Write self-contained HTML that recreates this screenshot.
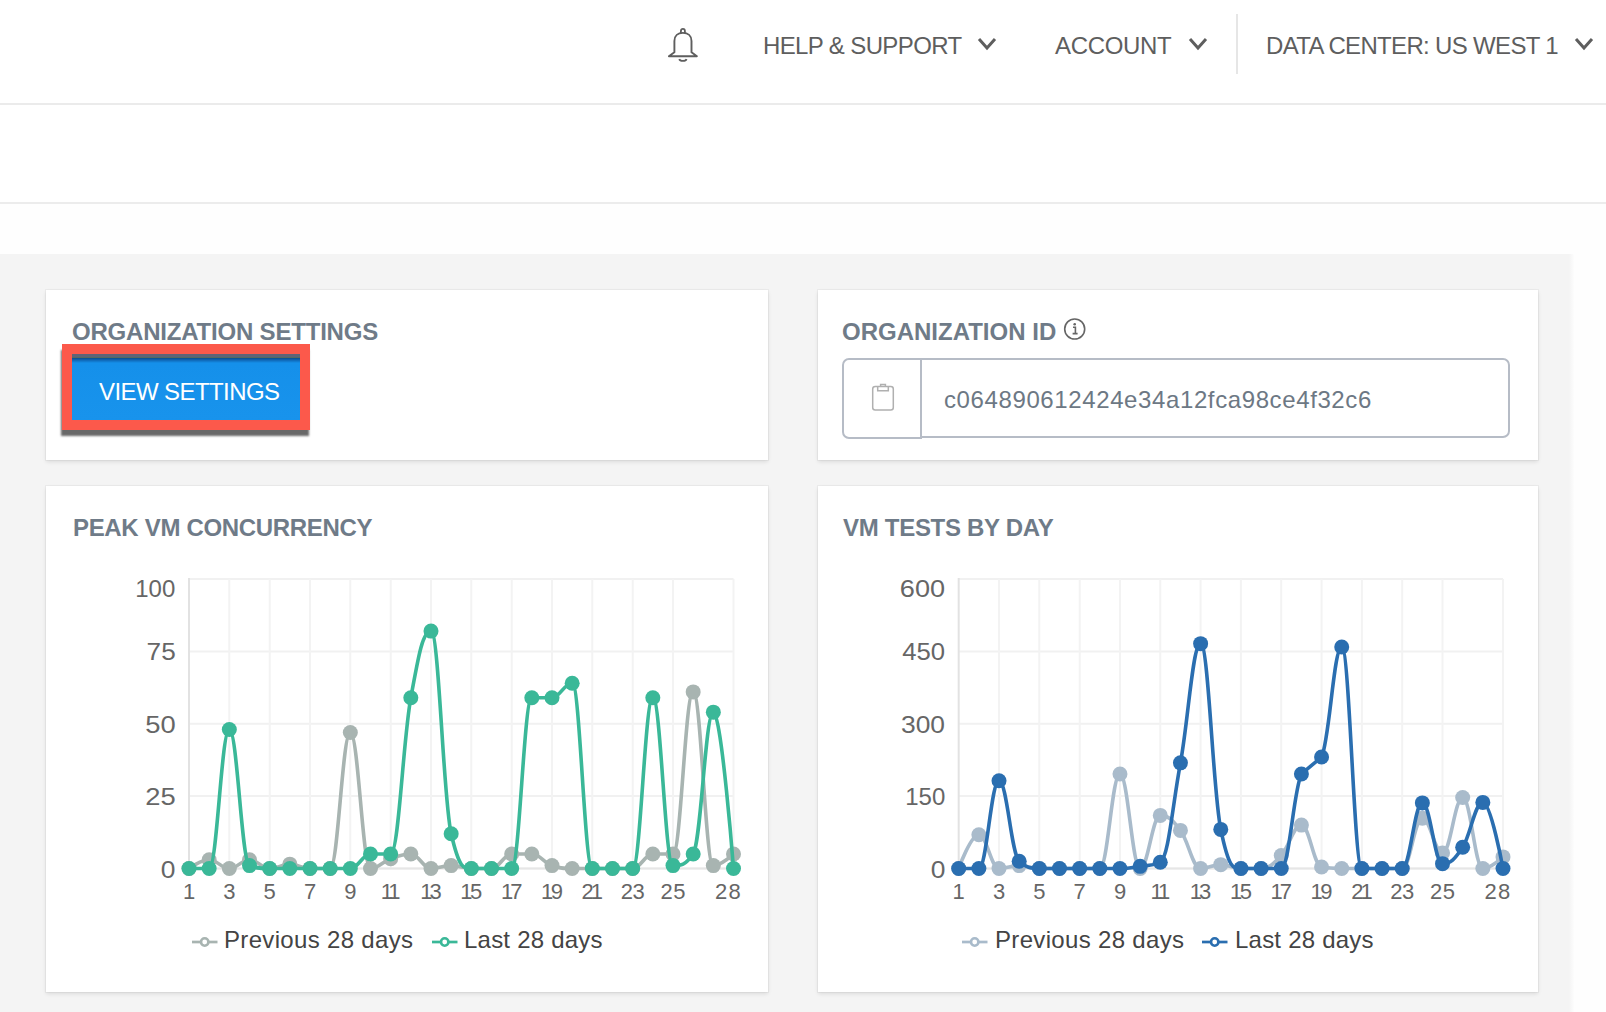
<!DOCTYPE html>
<html><head><meta charset="utf-8"><title>Dashboard</title>
<style>
*{box-sizing:border-box}
html,body{margin:0;padding:0;width:1606px;height:1012px;overflow:hidden;background:#fefefe;font-family:"Liberation Sans",sans-serif;position:relative}
.abs{position:absolute}
.hdr{position:absolute;left:0;top:0;width:1606px;height:105px;border-bottom:2px solid #ebebeb;background:#fff}
.nav{position:absolute;top:32px;font-size:24px;color:#5e5e5e;white-space:nowrap;line-height:28px}
.band{position:absolute;left:0;top:105px;width:1606px;height:99px;border-bottom:2px solid #ececec;background:#fff}
.gray{position:absolute;left:0;top:254px;width:1574px;height:758px;background:linear-gradient(90deg,#f4f4f4 0,#f4f4f4 1569px,#fdfdfd 1574px)}
.card{position:absolute;background:#fff;box-shadow:0 0 0 1px rgba(0,0,0,0.035),0 2px 4px rgba(0,0,0,0.10)}
.title{position:absolute;font-weight:700;font-size:24px;color:#6f7b88;white-space:nowrap;line-height:28px}
.yl{position:absolute;font-size:24px;color:#666;text-align:right;line-height:28px;white-space:nowrap}
.xl{position:absolute;font-size:22px;color:#666;text-align:center;width:60px;line-height:22px;white-space:nowrap}
.leg{position:absolute;font-size:24px;color:#444;white-space:nowrap;line-height:28px}
svg{position:absolute;left:0;top:0}
</style></head><body>
<div class="hdr">
  <svg width="40" height="44" style="left:663px;top:22px" viewBox="0 0 40 44">
    <path d="M11.4 30.2 L11.4 19 C11.4 13.6 15 10.9 19.9 10.9 C24.8 10.9 28.5 13.6 28.5 19 L28.5 30.2 L33.9 34.2 L5.9 34.2 Z" fill="none" stroke="#5e5e5e" stroke-width="1.9" stroke-linejoin="round"/>
    <path d="M17.9 11 L17.9 8.9 A2 2 0 0 1 21.9 8.9 L21.9 11" fill="none" stroke="#5e5e5e" stroke-width="1.8"/>
    <path d="M16.2 37.1 A3.8 2.4 0 0 0 23.6 37.1" fill="none" stroke="#5e5e5e" stroke-width="1.8"/>
  </svg>
  <div class="nav" style="left:763px;letter-spacing:-0.62px">HELP &amp; SUPPORT</div>
  <svg width="24" height="16" style="left:975px;top:36px"><polyline points="4,3 12,12 20,3" fill="none" stroke="#5e5e5e" stroke-width="3"/></svg>
  <div class="nav" style="left:1055px;letter-spacing:-0.33px">ACCOUNT</div>
  <svg width="24" height="16" style="left:1186px;top:36px"><polyline points="4,3 12,12 20,3" fill="none" stroke="#5e5e5e" stroke-width="3"/></svg>
  <div class="abs" style="left:1236px;top:14px;width:2px;height:60px;background:#e6e6e6"></div>
  <div class="nav" style="left:1266px;letter-spacing:-0.67px">DATA CENTER: US WEST 1</div>
  <svg width="24" height="16" style="left:1572px;top:36px"><polyline points="4,3 12,12 20,3" fill="none" stroke="#5e5e5e" stroke-width="3"/></svg>
</div>
<div class="band"></div>
<div class="gray"></div>

<div class="card" style="left:46px;top:290px;width:722px;height:170px"></div>
<div class="title" style="left:72px;top:318px;letter-spacing:-0.2px">ORGANIZATION SETTINGS</div>
<div class="abs" style="left:62px;top:344px;width:248px;height:86px;background:#fc594b;box-shadow:-1.5px 6px 2px rgba(55,55,55,0.75)"></div>
<div class="abs" style="left:72px;top:354px;width:228px;height:66px;background:linear-gradient(#5f6478 0,#5f6478 3px,#566a60 3px,#566a60 4px,#0d4a8c 4px,#0f66b4 6px,#1590ea 9px,#1893ec 100%)"></div>
<div class="abs" style="left:99px;top:378px;font-size:24px;color:#fff;line-height:28px;white-space:nowrap;letter-spacing:-0.58px">VIEW SETTINGS</div>

<div class="card" style="left:818px;top:290px;width:720px;height:170px"></div>
<div class="title" style="left:842px;top:318px">ORGANIZATION ID</div>
<svg width="26" height="26" style="left:1062px;top:316px" viewBox="0 0 26 26">
  <circle cx="12.7" cy="13" r="10" fill="none" stroke="#666" stroke-width="1.6"/>
  <circle cx="12.7" cy="8.2" r="1.3" fill="#666"/>
  <path d="M11 11.2 L13.4 11.2 L13.4 17.6 M10.6 17.6 L15.6 17.6" fill="none" stroke="#666" stroke-width="1.6"/>
</svg>
<div class="abs" style="left:920px;top:358px;width:590px;height:80px;border:2px solid #b6bcc6;border-radius:0 7px 7px 0"></div>
<div class="abs" style="left:842px;top:358px;width:80px;height:81px;border:2px solid #b6bcc6;border-radius:7px 0 0 7px;background:#fff"></div>
<svg width="30" height="32" style="left:868px;top:381px" viewBox="0 0 30 32">
  <rect x="4.7" y="5.4" width="20.6" height="23.6" rx="2.5" fill="none" stroke="#b0b0b0" stroke-width="1.5"/>
  <path d="M9.7 5.4 L9.7 9.7 L20.3 9.7 L20.3 5.4 M12.6 5.4 L12.6 3.6 L17.4 3.6 L17.4 5.4" fill="none" stroke="#b0b0b0" stroke-width="1.5"/>
</svg>
<div class="abs" style="left:944px;top:386px;font-size:24px;color:#6d7884;line-height:28px;white-space:nowrap;letter-spacing:0.61px">c064890612424e34a12fca98ce4f32c6</div>

<div class="card" style="left:46px;top:486px;width:722px;height:506px"></div>
<div class="title" style="left:73px;top:514px;letter-spacing:-0.33px">PEAK VM CONCURRENCY</div>
<div class="card" style="left:818px;top:486px;width:720px;height:506px"></div>
<div class="title" style="left:843px;top:514px;letter-spacing:-0.29px">VM TESTS BY DAY</div>

<svg width="1606" height="1012" style="left:0;top:0">
<line x1="189" y1="868.5" x2="733.5" y2="868.5" stroke="#f1f1f1" stroke-width="2"/>
<line x1="189" y1="796.1" x2="733.5" y2="796.1" stroke="#f1f1f1" stroke-width="2"/>
<line x1="189" y1="723.8" x2="733.5" y2="723.8" stroke="#f1f1f1" stroke-width="2"/>
<line x1="189" y1="651.4" x2="733.5" y2="651.4" stroke="#f1f1f1" stroke-width="2"/>
<line x1="189" y1="579.0" x2="733.5" y2="579.0" stroke="#f1f1f1" stroke-width="2"/>
<line x1="229.3" y1="579" x2="229.3" y2="868.5" stroke="#f3f3f3" stroke-width="2"/>
<line x1="269.7" y1="579" x2="269.7" y2="868.5" stroke="#f3f3f3" stroke-width="2"/>
<line x1="310.0" y1="579" x2="310.0" y2="868.5" stroke="#f3f3f3" stroke-width="2"/>
<line x1="350.3" y1="579" x2="350.3" y2="868.5" stroke="#f3f3f3" stroke-width="2"/>
<line x1="390.7" y1="579" x2="390.7" y2="868.5" stroke="#f3f3f3" stroke-width="2"/>
<line x1="431.0" y1="579" x2="431.0" y2="868.5" stroke="#f3f3f3" stroke-width="2"/>
<line x1="471.3" y1="579" x2="471.3" y2="868.5" stroke="#f3f3f3" stroke-width="2"/>
<line x1="511.7" y1="579" x2="511.7" y2="868.5" stroke="#f3f3f3" stroke-width="2"/>
<line x1="552.0" y1="579" x2="552.0" y2="868.5" stroke="#f3f3f3" stroke-width="2"/>
<line x1="592.3" y1="579" x2="592.3" y2="868.5" stroke="#f3f3f3" stroke-width="2"/>
<line x1="632.7" y1="579" x2="632.7" y2="868.5" stroke="#f3f3f3" stroke-width="2"/>
<line x1="673.0" y1="579" x2="673.0" y2="868.5" stroke="#f3f3f3" stroke-width="2"/>
<line x1="733.5" y1="579" x2="733.5" y2="868.5" stroke="#f3f3f3" stroke-width="2"/>
<line x1="189" y1="578" x2="189" y2="869.5" stroke="#e2e2e2" stroke-width="2"/>
<line x1="189" y1="868.5" x2="733.5" y2="868.5" stroke="#e6e6e6" stroke-width="2"/>
<path d="M 189.00 868.50 C 189.00 868.50 201.10 859.82 209.17 859.82 C 217.23 859.82 221.27 868.50 229.33 868.50 C 237.40 868.50 241.43 859.82 249.50 859.82 C 257.57 859.82 261.60 868.50 269.67 868.50 C 277.73 868.50 281.77 864.16 289.83 864.16 C 297.90 864.16 301.93 868.50 310.00 868.50 C 318.07 868.50 322.10 868.50 330.17 868.50 C 338.23 868.50 342.27 732.43 350.33 732.43 C 358.40 732.43 362.43 868.50 370.50 868.50 C 378.57 868.50 382.60 861.55 390.67 858.66 C 398.73 855.76 402.77 854.02 410.83 854.02 C 418.90 854.02 422.93 868.50 431.00 868.50 C 439.07 868.50 443.10 865.61 451.17 865.61 C 459.23 865.61 463.27 868.50 471.33 868.50 C 479.40 868.50 483.43 868.50 491.50 868.50 C 499.57 868.50 503.60 854.02 511.67 854.02 C 519.73 854.02 523.77 854.02 531.83 854.02 C 539.90 854.02 543.93 862.71 552.00 865.61 C 560.07 868.50 564.10 868.50 572.17 868.50 C 580.23 868.50 584.27 868.50 592.33 868.50 C 600.40 868.50 604.43 868.50 612.50 868.50 C 620.57 868.50 624.60 868.50 632.67 868.50 C 640.73 868.50 644.77 854.02 652.83 854.02 C 660.90 854.02 664.93 854.02 673.00 854.02 C 681.07 854.02 685.10 691.90 693.17 691.90 C 701.23 691.90 705.27 865.61 713.33 865.61 C 721.40 865.61 733.50 854.02 733.50 854.02" fill="none" stroke="#a8b4b1" stroke-width="3.6" stroke-linejoin="round" stroke-linecap="round"/>
<circle cx="189.00" cy="868.50" r="7.5" fill="#a8b4b1"/>
<circle cx="209.17" cy="859.82" r="7.5" fill="#a8b4b1"/>
<circle cx="229.33" cy="868.50" r="7.5" fill="#a8b4b1"/>
<circle cx="249.50" cy="859.82" r="7.5" fill="#a8b4b1"/>
<circle cx="269.67" cy="868.50" r="7.5" fill="#a8b4b1"/>
<circle cx="289.83" cy="864.16" r="7.5" fill="#a8b4b1"/>
<circle cx="310.00" cy="868.50" r="7.5" fill="#a8b4b1"/>
<circle cx="330.17" cy="868.50" r="7.5" fill="#a8b4b1"/>
<circle cx="350.33" cy="732.43" r="7.5" fill="#a8b4b1"/>
<circle cx="370.50" cy="868.50" r="7.5" fill="#a8b4b1"/>
<circle cx="390.67" cy="858.66" r="7.5" fill="#a8b4b1"/>
<circle cx="410.83" cy="854.02" r="7.5" fill="#a8b4b1"/>
<circle cx="431.00" cy="868.50" r="7.5" fill="#a8b4b1"/>
<circle cx="451.17" cy="865.61" r="7.5" fill="#a8b4b1"/>
<circle cx="471.33" cy="868.50" r="7.5" fill="#a8b4b1"/>
<circle cx="491.50" cy="868.50" r="7.5" fill="#a8b4b1"/>
<circle cx="511.67" cy="854.02" r="7.5" fill="#a8b4b1"/>
<circle cx="531.83" cy="854.02" r="7.5" fill="#a8b4b1"/>
<circle cx="552.00" cy="865.61" r="7.5" fill="#a8b4b1"/>
<circle cx="572.17" cy="868.50" r="7.5" fill="#a8b4b1"/>
<circle cx="592.33" cy="868.50" r="7.5" fill="#a8b4b1"/>
<circle cx="612.50" cy="868.50" r="7.5" fill="#a8b4b1"/>
<circle cx="632.67" cy="868.50" r="7.5" fill="#a8b4b1"/>
<circle cx="652.83" cy="854.02" r="7.5" fill="#a8b4b1"/>
<circle cx="673.00" cy="854.02" r="7.5" fill="#a8b4b1"/>
<circle cx="693.17" cy="691.90" r="7.5" fill="#a8b4b1"/>
<circle cx="713.33" cy="865.61" r="7.5" fill="#a8b4b1"/>
<circle cx="733.50" cy="854.02" r="7.5" fill="#a8b4b1"/>
<path d="M 189.00 868.50 C 189.00 868.50 201.10 868.50 209.17 868.50 C 217.23 868.50 221.27 729.54 229.33 729.54 C 237.40 729.54 241.43 862.71 249.50 865.61 C 257.57 868.50 261.60 868.50 269.67 868.50 C 277.73 868.50 281.77 868.50 289.83 868.50 C 297.90 868.50 301.93 868.50 310.00 868.50 C 318.07 868.50 322.10 868.50 330.17 868.50 C 338.23 868.50 342.27 868.50 350.33 868.50 C 358.40 868.50 362.43 854.02 370.50 854.02 C 378.57 854.02 382.60 854.02 390.67 854.02 C 398.73 854.02 402.77 742.28 410.83 697.69 C 418.90 653.11 422.93 631.11 431.00 631.11 C 439.07 631.11 443.10 799.02 451.17 833.76 C 459.23 868.50 463.27 868.50 471.33 868.50 C 479.40 868.50 483.43 868.50 491.50 868.50 C 499.57 868.50 503.60 868.50 511.67 868.50 C 519.73 868.50 523.77 697.69 531.83 697.69 C 539.90 697.69 543.93 697.69 552.00 697.69 C 560.07 697.69 564.10 683.22 572.17 683.22 C 580.23 683.22 584.27 868.50 592.33 868.50 C 600.40 868.50 604.43 868.50 612.50 868.50 C 620.57 868.50 624.60 868.50 632.67 868.50 C 640.73 868.50 644.77 697.69 652.83 697.69 C 660.90 697.69 664.93 865.61 673.00 865.61 C 681.07 865.61 685.10 865.61 693.17 854.02 C 701.23 842.44 705.27 712.17 713.33 712.17 C 721.40 712.17 733.50 868.50 733.50 868.50" fill="none" stroke="#3ab898" stroke-width="3.6" stroke-linejoin="round" stroke-linecap="round"/>
<circle cx="189.00" cy="868.50" r="7.5" fill="#3ab898"/>
<circle cx="209.17" cy="868.50" r="7.5" fill="#3ab898"/>
<circle cx="229.33" cy="729.54" r="7.5" fill="#3ab898"/>
<circle cx="249.50" cy="865.61" r="7.5" fill="#3ab898"/>
<circle cx="269.67" cy="868.50" r="7.5" fill="#3ab898"/>
<circle cx="289.83" cy="868.50" r="7.5" fill="#3ab898"/>
<circle cx="310.00" cy="868.50" r="7.5" fill="#3ab898"/>
<circle cx="330.17" cy="868.50" r="7.5" fill="#3ab898"/>
<circle cx="350.33" cy="868.50" r="7.5" fill="#3ab898"/>
<circle cx="370.50" cy="854.02" r="7.5" fill="#3ab898"/>
<circle cx="390.67" cy="854.02" r="7.5" fill="#3ab898"/>
<circle cx="410.83" cy="697.69" r="7.5" fill="#3ab898"/>
<circle cx="431.00" cy="631.11" r="7.5" fill="#3ab898"/>
<circle cx="451.17" cy="833.76" r="7.5" fill="#3ab898"/>
<circle cx="471.33" cy="868.50" r="7.5" fill="#3ab898"/>
<circle cx="491.50" cy="868.50" r="7.5" fill="#3ab898"/>
<circle cx="511.67" cy="868.50" r="7.5" fill="#3ab898"/>
<circle cx="531.83" cy="697.69" r="7.5" fill="#3ab898"/>
<circle cx="552.00" cy="697.69" r="7.5" fill="#3ab898"/>
<circle cx="572.17" cy="683.22" r="7.5" fill="#3ab898"/>
<circle cx="592.33" cy="868.50" r="7.5" fill="#3ab898"/>
<circle cx="612.50" cy="868.50" r="7.5" fill="#3ab898"/>
<circle cx="632.67" cy="868.50" r="7.5" fill="#3ab898"/>
<circle cx="652.83" cy="697.69" r="7.5" fill="#3ab898"/>
<circle cx="673.00" cy="865.61" r="7.5" fill="#3ab898"/>
<circle cx="693.17" cy="854.02" r="7.5" fill="#3ab898"/>
<circle cx="713.33" cy="712.17" r="7.5" fill="#3ab898"/>
<circle cx="733.50" cy="868.50" r="7.5" fill="#3ab898"/>
<line x1="958.7" y1="868.5" x2="1503" y2="868.5" stroke="#f1f1f1" stroke-width="2"/>
<line x1="958.7" y1="796.1" x2="1503" y2="796.1" stroke="#f1f1f1" stroke-width="2"/>
<line x1="958.7" y1="723.8" x2="1503" y2="723.8" stroke="#f1f1f1" stroke-width="2"/>
<line x1="958.7" y1="651.4" x2="1503" y2="651.4" stroke="#f1f1f1" stroke-width="2"/>
<line x1="958.7" y1="579.0" x2="1503" y2="579.0" stroke="#f1f1f1" stroke-width="2"/>
<line x1="999.0" y1="579" x2="999.0" y2="868.5" stroke="#f3f3f3" stroke-width="2"/>
<line x1="1039.3" y1="579" x2="1039.3" y2="868.5" stroke="#f3f3f3" stroke-width="2"/>
<line x1="1079.7" y1="579" x2="1079.7" y2="868.5" stroke="#f3f3f3" stroke-width="2"/>
<line x1="1120.0" y1="579" x2="1120.0" y2="868.5" stroke="#f3f3f3" stroke-width="2"/>
<line x1="1160.3" y1="579" x2="1160.3" y2="868.5" stroke="#f3f3f3" stroke-width="2"/>
<line x1="1200.6" y1="579" x2="1200.6" y2="868.5" stroke="#f3f3f3" stroke-width="2"/>
<line x1="1240.9" y1="579" x2="1240.9" y2="868.5" stroke="#f3f3f3" stroke-width="2"/>
<line x1="1281.2" y1="579" x2="1281.2" y2="868.5" stroke="#f3f3f3" stroke-width="2"/>
<line x1="1321.6" y1="579" x2="1321.6" y2="868.5" stroke="#f3f3f3" stroke-width="2"/>
<line x1="1361.9" y1="579" x2="1361.9" y2="868.5" stroke="#f3f3f3" stroke-width="2"/>
<line x1="1402.2" y1="579" x2="1402.2" y2="868.5" stroke="#f3f3f3" stroke-width="2"/>
<line x1="1442.5" y1="579" x2="1442.5" y2="868.5" stroke="#f3f3f3" stroke-width="2"/>
<line x1="1503.0" y1="579" x2="1503.0" y2="868.5" stroke="#f3f3f3" stroke-width="2"/>
<line x1="958.7" y1="578" x2="958.7" y2="869.5" stroke="#e2e2e2" stroke-width="2"/>
<line x1="958.7" y1="868.5" x2="1503" y2="868.5" stroke="#e6e6e6" stroke-width="2"/>
<path d="M 958.70 868.50 C 958.70 868.50 970.80 834.73 978.86 834.73 C 986.92 834.73 990.95 868.50 999.02 868.50 C 1007.08 868.50 1011.11 865.61 1019.18 865.61 C 1027.24 865.61 1031.27 868.50 1039.34 868.50 C 1047.40 868.50 1051.43 868.50 1059.50 868.50 C 1067.56 868.50 1071.59 868.50 1079.66 868.50 C 1087.72 868.50 1091.75 868.50 1099.81 868.50 C 1107.88 868.50 1111.91 773.93 1119.97 773.93 C 1128.04 773.93 1132.07 868.50 1140.13 868.50 C 1148.20 868.50 1152.23 815.42 1160.29 815.42 C 1168.36 815.42 1172.39 819.77 1180.45 830.38 C 1188.52 841.00 1192.55 868.50 1200.61 868.50 C 1208.67 868.50 1212.71 864.64 1220.77 864.64 C 1228.83 864.64 1232.87 868.50 1240.93 868.50 C 1248.99 868.50 1253.03 868.50 1261.09 868.50 C 1269.15 868.50 1273.18 864.16 1281.25 855.47 C 1289.31 846.79 1293.34 825.08 1301.41 825.08 C 1309.47 825.08 1313.50 865.61 1321.57 867.05 C 1329.63 868.50 1333.66 868.50 1341.73 868.50 C 1349.79 868.50 1353.82 868.50 1361.89 868.50 C 1369.95 868.50 1373.98 868.50 1382.04 868.50 C 1390.11 868.50 1394.14 868.50 1402.20 868.50 C 1410.27 868.50 1414.30 818.32 1422.36 818.32 C 1430.43 818.32 1434.46 853.06 1442.52 853.06 C 1450.59 853.06 1454.62 797.57 1462.68 797.57 C 1470.75 797.57 1474.78 868.50 1482.84 868.50 C 1490.90 868.50 1503.00 856.92 1503.00 856.92" fill="none" stroke="#a9bbcb" stroke-width="3.6" stroke-linejoin="round" stroke-linecap="round"/>
<circle cx="958.70" cy="868.50" r="7.5" fill="#a9bbcb"/>
<circle cx="978.86" cy="834.73" r="7.5" fill="#a9bbcb"/>
<circle cx="999.02" cy="868.50" r="7.5" fill="#a9bbcb"/>
<circle cx="1019.18" cy="865.61" r="7.5" fill="#a9bbcb"/>
<circle cx="1039.34" cy="868.50" r="7.5" fill="#a9bbcb"/>
<circle cx="1059.50" cy="868.50" r="7.5" fill="#a9bbcb"/>
<circle cx="1079.66" cy="868.50" r="7.5" fill="#a9bbcb"/>
<circle cx="1099.81" cy="868.50" r="7.5" fill="#a9bbcb"/>
<circle cx="1119.97" cy="773.93" r="7.5" fill="#a9bbcb"/>
<circle cx="1140.13" cy="868.50" r="7.5" fill="#a9bbcb"/>
<circle cx="1160.29" cy="815.42" r="7.5" fill="#a9bbcb"/>
<circle cx="1180.45" cy="830.38" r="7.5" fill="#a9bbcb"/>
<circle cx="1200.61" cy="868.50" r="7.5" fill="#a9bbcb"/>
<circle cx="1220.77" cy="864.64" r="7.5" fill="#a9bbcb"/>
<circle cx="1240.93" cy="868.50" r="7.5" fill="#a9bbcb"/>
<circle cx="1261.09" cy="868.50" r="7.5" fill="#a9bbcb"/>
<circle cx="1281.25" cy="855.47" r="7.5" fill="#a9bbcb"/>
<circle cx="1301.41" cy="825.08" r="7.5" fill="#a9bbcb"/>
<circle cx="1321.57" cy="867.05" r="7.5" fill="#a9bbcb"/>
<circle cx="1341.73" cy="868.50" r="7.5" fill="#a9bbcb"/>
<circle cx="1361.89" cy="868.50" r="7.5" fill="#a9bbcb"/>
<circle cx="1382.04" cy="868.50" r="7.5" fill="#a9bbcb"/>
<circle cx="1402.20" cy="868.50" r="7.5" fill="#a9bbcb"/>
<circle cx="1422.36" cy="818.32" r="7.5" fill="#a9bbcb"/>
<circle cx="1442.52" cy="853.06" r="7.5" fill="#a9bbcb"/>
<circle cx="1462.68" cy="797.57" r="7.5" fill="#a9bbcb"/>
<circle cx="1482.84" cy="868.50" r="7.5" fill="#a9bbcb"/>
<circle cx="1503.00" cy="856.92" r="7.5" fill="#a9bbcb"/>
<path d="M 958.70 868.50 C 958.70 868.50 970.80 868.50 978.86 868.50 C 986.92 868.50 990.95 780.68 999.02 780.68 C 1007.08 780.68 1011.11 854.03 1019.18 861.26 C 1027.24 868.50 1031.27 868.50 1039.34 868.50 C 1047.40 868.50 1051.43 868.50 1059.50 868.50 C 1067.56 868.50 1071.59 868.50 1079.66 868.50 C 1087.72 868.50 1091.75 868.50 1099.81 868.50 C 1107.88 868.50 1111.91 868.50 1119.97 868.50 C 1128.04 868.50 1132.07 867.58 1140.13 866.33 C 1148.20 865.07 1152.23 866.33 1160.29 862.23 C 1168.36 858.13 1172.39 806.55 1180.45 762.83 C 1188.52 719.12 1192.55 643.65 1200.61 643.65 C 1208.67 643.65 1212.71 790.34 1220.77 829.42 C 1228.83 868.50 1232.87 868.50 1240.93 868.50 C 1248.99 868.50 1253.03 868.50 1261.09 868.50 C 1269.15 868.50 1273.18 868.50 1281.25 868.50 C 1289.31 868.50 1293.34 790.82 1301.41 773.93 L 1321.57 757.04 C 1329.63 740.15 1333.66 647.03 1341.73 647.03 C 1349.79 647.03 1353.82 868.50 1361.89 868.50 C 1369.95 868.50 1373.98 868.50 1382.04 868.50 C 1390.11 868.50 1394.14 868.50 1402.20 868.50 C 1410.27 868.50 1414.30 802.88 1422.36 802.88 C 1430.43 802.88 1434.46 863.67 1442.52 863.67 C 1450.59 863.67 1454.62 859.53 1462.68 847.27 C 1470.75 835.01 1474.78 802.40 1482.84 802.40 C 1490.90 802.40 1503.00 868.50 1503.00 868.50" fill="none" stroke="#2a6eb0" stroke-width="3.6" stroke-linejoin="round" stroke-linecap="round"/>
<circle cx="958.70" cy="868.50" r="7.5" fill="#2a6eb0"/>
<circle cx="978.86" cy="868.50" r="7.5" fill="#2a6eb0"/>
<circle cx="999.02" cy="780.68" r="7.5" fill="#2a6eb0"/>
<circle cx="1019.18" cy="861.26" r="7.5" fill="#2a6eb0"/>
<circle cx="1039.34" cy="868.50" r="7.5" fill="#2a6eb0"/>
<circle cx="1059.50" cy="868.50" r="7.5" fill="#2a6eb0"/>
<circle cx="1079.66" cy="868.50" r="7.5" fill="#2a6eb0"/>
<circle cx="1099.81" cy="868.50" r="7.5" fill="#2a6eb0"/>
<circle cx="1119.97" cy="868.50" r="7.5" fill="#2a6eb0"/>
<circle cx="1140.13" cy="866.33" r="7.5" fill="#2a6eb0"/>
<circle cx="1160.29" cy="862.23" r="7.5" fill="#2a6eb0"/>
<circle cx="1180.45" cy="762.83" r="7.5" fill="#2a6eb0"/>
<circle cx="1200.61" cy="643.65" r="7.5" fill="#2a6eb0"/>
<circle cx="1220.77" cy="829.42" r="7.5" fill="#2a6eb0"/>
<circle cx="1240.93" cy="868.50" r="7.5" fill="#2a6eb0"/>
<circle cx="1261.09" cy="868.50" r="7.5" fill="#2a6eb0"/>
<circle cx="1281.25" cy="868.50" r="7.5" fill="#2a6eb0"/>
<circle cx="1301.41" cy="773.93" r="7.5" fill="#2a6eb0"/>
<circle cx="1321.57" cy="757.04" r="7.5" fill="#2a6eb0"/>
<circle cx="1341.73" cy="647.03" r="7.5" fill="#2a6eb0"/>
<circle cx="1361.89" cy="868.50" r="7.5" fill="#2a6eb0"/>
<circle cx="1382.04" cy="868.50" r="7.5" fill="#2a6eb0"/>
<circle cx="1402.20" cy="868.50" r="7.5" fill="#2a6eb0"/>
<circle cx="1422.36" cy="802.88" r="7.5" fill="#2a6eb0"/>
<circle cx="1442.52" cy="863.67" r="7.5" fill="#2a6eb0"/>
<circle cx="1462.68" cy="847.27" r="7.5" fill="#2a6eb0"/>
<circle cx="1482.84" cy="802.40" r="7.5" fill="#2a6eb0"/>
<circle cx="1503.00" cy="868.50" r="7.5" fill="#2a6eb0"/>
</svg>
<div class="yl" style="right:1430.7px;top:855.5px;transform:scaleX(1.1);transform-origin:100% 50%">0</div>
<div class="yl" style="right:1430.7px;top:783.1px;transform:scaleX(1.14);transform-origin:100% 50%">25</div>
<div class="yl" style="right:1430.7px;top:710.8px;transform:scaleX(1.14);transform-origin:100% 50%">50</div>
<div class="yl" style="right:1430.7px;top:638.4px;transform:scaleX(1.09);transform-origin:100% 50%">75</div>
<div class="yl" style="right:1430.7px;top:574.5px;transform:scaleX(1.0);transform-origin:100% 50%">100</div>
<div class="xl" style="left:159.0px;top:880.5px;letter-spacing:0px">1</div>
<div class="xl" style="left:199.3px;top:880.5px;letter-spacing:0px">3</div>
<div class="xl" style="left:239.7px;top:880.5px;letter-spacing:0px">5</div>
<div class="xl" style="left:280.0px;top:880.5px;letter-spacing:0px">7</div>
<div class="xl" style="left:320.3px;top:880.5px;letter-spacing:0px">9</div>
<div class="xl" style="left:359.2px;top:880.5px;letter-spacing:-3px">11</div>
<div class="xl" style="left:399.5px;top:880.5px;letter-spacing:-3px">13</div>
<div class="xl" style="left:440.1px;top:880.5px;letter-spacing:-2.5px">15</div>
<div class="xl" style="left:480.2px;top:880.5px;letter-spacing:-3px">17</div>
<div class="xl" style="left:520.8px;top:880.5px;letter-spacing:-2.5px">19</div>
<div class="xl" style="left:560.8px;top:880.5px;letter-spacing:-3px">21</div>
<div class="xl" style="left:602.5px;top:880.5px;letter-spacing:-0.4px">23</div>
<div class="xl" style="left:643.3px;top:880.5px;letter-spacing:0.6px">25</div>
<div class="xl" style="left:698.4px;top:880.5px;letter-spacing:1.2px">28</div>
<div class="yl" style="right:660.7px;top:855.5px;transform:scaleX(1.1);transform-origin:100% 50%">0</div>
<div class="yl" style="right:660.7px;top:783.1px;transform:scaleX(1.0);transform-origin:100% 50%">150</div>
<div class="yl" style="right:660.7px;top:710.8px;transform:scaleX(1.1);transform-origin:100% 50%">300</div>
<div class="yl" style="right:660.7px;top:638.4px;transform:scaleX(1.07);transform-origin:100% 50%">450</div>
<div class="yl" style="right:660.7px;top:574.5px;transform:scaleX(1.13);transform-origin:100% 50%">600</div>
<div class="xl" style="left:928.7px;top:880.5px;letter-spacing:0px">1</div>
<div class="xl" style="left:969.0px;top:880.5px;letter-spacing:0px">3</div>
<div class="xl" style="left:1009.3px;top:880.5px;letter-spacing:0px">5</div>
<div class="xl" style="left:1049.7px;top:880.5px;letter-spacing:0px">7</div>
<div class="xl" style="left:1090.0px;top:880.5px;letter-spacing:0px">9</div>
<div class="xl" style="left:1128.8px;top:880.5px;letter-spacing:-3px">11</div>
<div class="xl" style="left:1169.1px;top:880.5px;letter-spacing:-3px">13</div>
<div class="xl" style="left:1209.7px;top:880.5px;letter-spacing:-2.5px">15</div>
<div class="xl" style="left:1249.7px;top:880.5px;letter-spacing:-3px">17</div>
<div class="xl" style="left:1290.3px;top:880.5px;letter-spacing:-2.5px">19</div>
<div class="xl" style="left:1330.4px;top:880.5px;letter-spacing:-3px">21</div>
<div class="xl" style="left:1372.0px;top:880.5px;letter-spacing:-0.4px">23</div>
<div class="xl" style="left:1412.8px;top:880.5px;letter-spacing:0.6px">25</div>
<div class="xl" style="left:1467.9px;top:880.5px;letter-spacing:1.2px">28</div>

<svg width="30" height="20" style="left:190px;top:931px"><line x1="2" y1="11" x2="27.5" y2="11" stroke="#a8b4b1" stroke-width="2.7"/><circle cx="14.7" cy="11" r="3.7" fill="#fff" stroke="#a8b4b1" stroke-width="2.6"/></svg>
<div class="leg" style="left:224px;top:926px;letter-spacing:0.33px">Previous 28 days</div>
<svg width="30" height="20" style="left:430px;top:931px"><line x1="2" y1="11" x2="27.5" y2="11" stroke="#3ab898" stroke-width="2.7"/><circle cx="14.7" cy="11" r="3.7" fill="#fff" stroke="#3ab898" stroke-width="2.6"/></svg>
<div class="leg" style="left:464px;top:926px;letter-spacing:0.22px">Last 28 days</div>

<svg width="30" height="20" style="left:960px;top:931px"><line x1="2" y1="11" x2="27.5" y2="11" stroke="#a9bbcb" stroke-width="2.7"/><circle cx="14.7" cy="11" r="3.7" fill="#fff" stroke="#a9bbcb" stroke-width="2.6"/></svg>
<div class="leg" style="left:995px;top:926px;letter-spacing:0.33px">Previous 28 days</div>
<svg width="30" height="20" style="left:1200px;top:931px"><line x1="2" y1="11" x2="27.5" y2="11" stroke="#2a6eb0" stroke-width="2.7"/><circle cx="14.7" cy="11" r="3.7" fill="#fff" stroke="#2a6eb0" stroke-width="2.6"/></svg>
<div class="leg" style="left:1235px;top:926px;letter-spacing:0.22px">Last 28 days</div>
</body></html>
